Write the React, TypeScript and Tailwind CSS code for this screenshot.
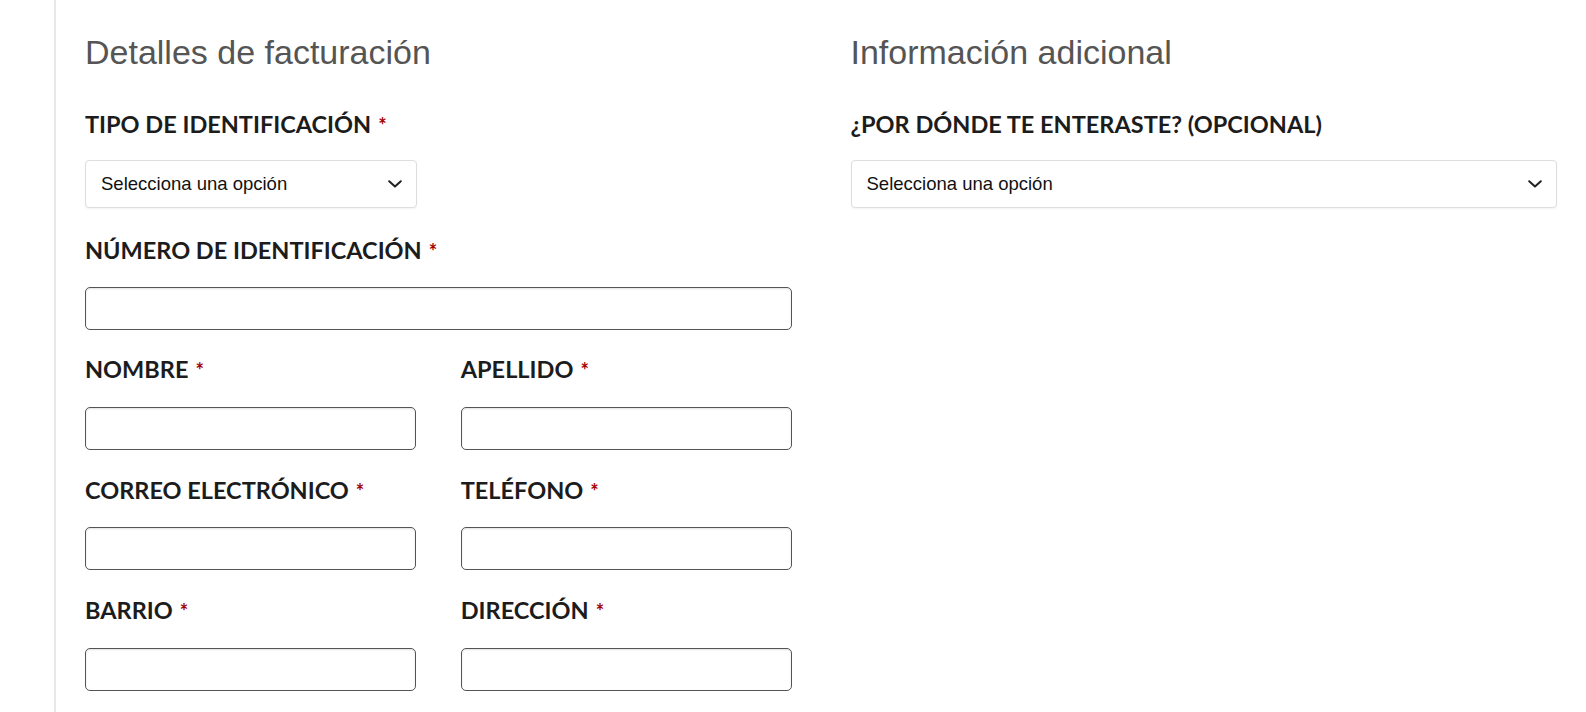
import React from "react";

const heading = "text-[34px] leading-none text-[#555555] font-['Liberation_Sans',Arial,sans-serif]";
const labelCls =
  "block text-[23.5px] leading-none font-bold uppercase text-[#1c1c1c] font-['Lato','Noto_Sans',sans-serif]";

function Chevron() {
  return (
    <svg width="14" height="8" viewBox="0 0 14 8" fill="none" className="shrink-0">
      <polyline points="1.2,1.2 7,6.6 12.8,1.2" stroke="#222" strokeWidth="2" strokeLinecap="round" strokeLinejoin="round" />
    </svg>
  );
}

function SelectBox() {
  return (
    <div className="flex h-[48px] w-full items-center justify-between rounded-[4px] border border-[#dedede] bg-white pl-[15px] pr-[14px] shadow-[0_1px_2px_rgba(0,0,0,0.05)]">
      <span className="text-[18.5px] text-[#111] font-['Liberation_Sans',Arial,sans-serif]">Selecciona una opción</span>
      <Chevron />
    </div>
  );
}

function Label({ text, required = true }: { text: string; required?: boolean }) {
  return (
    <label className={labelCls}>
      {text}
      {required ? <span className="ml-[7px] text-[20px] text-[#a30000]">*</span> : null}
    </label>
  );
}

function Field({ label, className = "" }: { label: string; className?: string }) {
  return (
    <div className={className}>
      <Label text={label} />
      <input
        type="text"
        className="mt-[25px] block h-[43px] w-full rounded-[5px] border border-[#555] bg-white px-3 shadow-[inset_0_1px_2px_rgba(0,0,0,0.12)] outline-none"
      />
    </div>
  );
}

export default function App() {
  return (
    <div className="min-h-[712px] w-full bg-white pl-[54px]">
      <div className="min-h-[712px] border-l-2 border-[#e8e8e8] pl-[29px] pr-[29px] pt-[35px]">
        <div className="grid grid-cols-2 gap-x-[59px]">
          {/* billing */}
          <section>
            <h3 className={heading}>Detalles de facturación</h3>
            <div className="mt-[44px] w-[332px]">
              <Label text="Tipo de identificación" />
              <div className="mt-[23px]">
                <SelectBox />
              </div>
            </div>
            <Field label="Número de identificación" className="mt-[31px]" />
            <div className="mt-[28px] grid grid-cols-2 gap-x-[45px] gap-y-[29px]">
              <Field label="Nombre" />
              <Field label="Apellido" />
              <Field label="Correo electrónico" />
              <Field label="Teléfono" />
              <Field label="Barrio" />
              <Field label="Dirección" />
            </div>
          </section>

          {/* additional info */}
          <section>
            <h3 className={heading}>Información adicional</h3>
            <div className="mt-[44px]">
              <Label text="¿Por dónde te enteraste? (opcional)" required={false} />
              <div className="mt-[23px]">
                <SelectBox />
              </div>
            </div>
          </section>
        </div>
      </div>
    </div>
  );
}
